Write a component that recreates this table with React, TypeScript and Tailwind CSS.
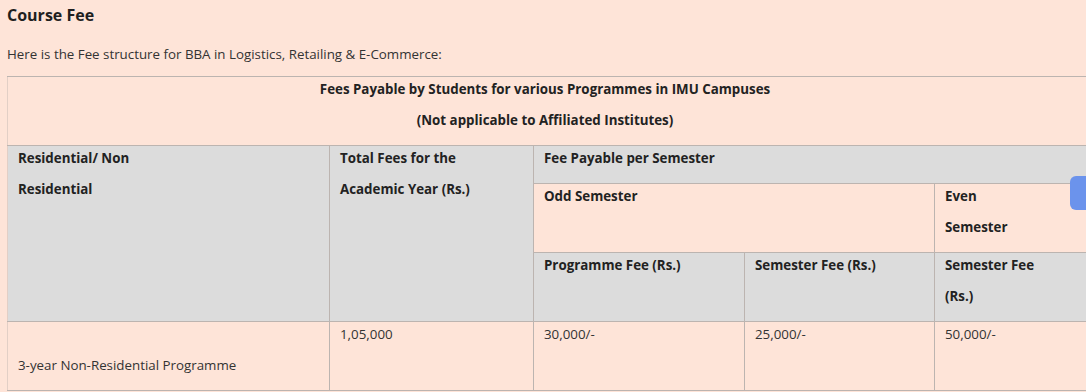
import React from 'react';

const cell = 'border border-[#bcb4b0] align-top pl-[10px] pr-[10px] pt-0 pb-[9px] leading-[31px]';

const Txt = ({ children }: { children: React.ReactNode }) => <div className="-mt-[3px]">{children}</div>;

export default function App() {
  return (
    <div className="relative w-[1086px] h-[392px] overflow-hidden bg-[#fee4d8] text-[#222] font-['Open_Sans',sans-serif]">
      <div className="pl-[7px]">
        <h2 className="pt-[5px] text-[16px] leading-[20px] font-bold text-[#1f1f1f]">Course Fee</h2>
        <p className="mt-[19px] text-[13.33px] leading-[20px] text-[#333]">
          Here is the Fee structure for BBA in Logistics, Retailing &amp; E-Commerce:
        </p>

        <table className="mt-[12px] w-[1110px] table-fixed border-collapse text-[13.33px] border-l border-l-[#e2cfc6]">
          <colgroup>
            <col className="w-[322px]" />
            <col className="w-[204px]" />
            <col className="w-[211px]" />
            <col className="w-[190px]" />
            <col className="w-[183px]" />
          </colgroup>
          <tbody>
            {/* title */}
            <tr className="bg-[#fee4d8]">
              <td colSpan={5} className={`${cell} text-center font-bold border-l-[#e2cfc6] pr-[45px]`}>
                <Txt>
                  Fees Payable by Students for various Programmes in IMU Campuses
                  <br />
                  (Not applicable to Affiliated Institutes)
                </Txt>
              </td>
            </tr>

            {/* header rows */}
            <tr className="bg-[#dcdcdc] font-bold">
              <td rowSpan={3} className={`${cell} border-l-[#e2cfc6]`}>
                <Txt>
                  Residential/ Non
                  <br />
                  Residential
                </Txt>
              </td>
              <td rowSpan={3} className={cell}>
                <Txt>
                  Total Fees for the
                  <br />
                  Academic Year (Rs.)
                </Txt>
              </td>
              <td colSpan={3} className={cell}>
                <Txt>Fee Payable per Semester</Txt>
              </td>
            </tr>
            <tr className="bg-[#fee4d8] font-bold">
              <td colSpan={2} className={cell}>
                <Txt>Odd Semester</Txt>
              </td>
              <td className={cell}>
                <Txt>
                  Even
                  <br />
                  Semester
                </Txt>
              </td>
            </tr>
            <tr className="bg-[#dcdcdc] font-bold">
              <td className={cell}>
                <Txt>Programme Fee (Rs.)</Txt>
              </td>
              <td className={cell}>
                <Txt>Semester Fee (Rs.)</Txt>
              </td>
              <td className={cell}>
                <Txt>
                  Semester Fee
                  <br />
                  (Rs.)
                </Txt>
              </td>
            </tr>

            {/* data */}
            <tr className="bg-[#fee4d8] text-[#333]">
              <td className={`${cell} border-l-[#e2cfc6]`}>
                <Txt>
                  <br />
                  3-year Non-Residential Programme
                </Txt>
              </td>
              <td className={cell}>
                <Txt>1,05,000</Txt>
              </td>
              <td className={cell}>
                <Txt>30,000/-</Txt>
              </td>
              <td className={cell}>
                <Txt>25,000/-</Txt>
              </td>
              <td className={cell}>
                <Txt>50,000/-</Txt>
              </td>
            </tr>
          </tbody>
        </table>
      </div>

      {/* side tab */}
      <div className="absolute left-[1070px] top-[176px] w-[30px] h-[34px] rounded-l-[6px] bg-[#6b93ec]" />
    </div>
  );
}
